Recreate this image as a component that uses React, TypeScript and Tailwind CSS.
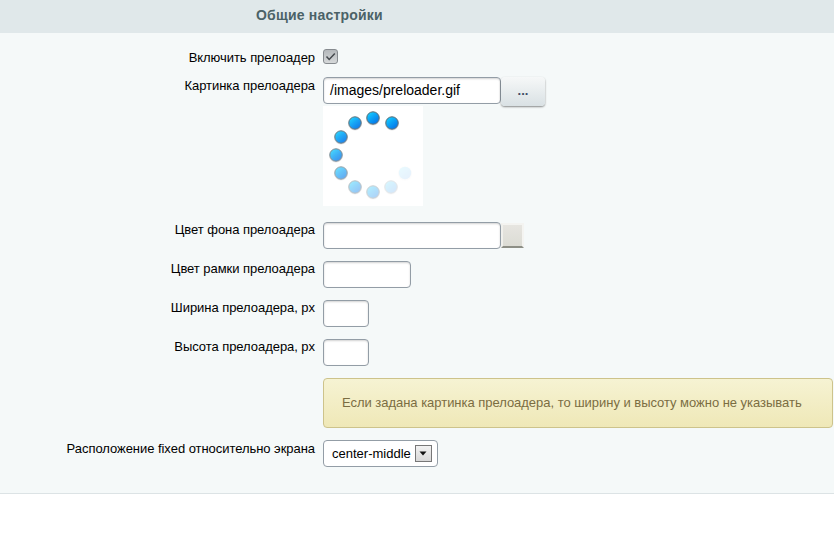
import type { ReactNode } from "react";

const fieldClass =
  "h-[27px] rounded-[4px] border border-[#939da6] bg-white shadow-[inset_0_1px_2px_rgba(0,0,0,0.18)] text-black";

function Row({ label, children, className = "", labelClass = "pt-[1px]" }: { label?: string; children: ReactNode; className?: string; labelClass?: string }) {
  return (
    <div className={`flex ${className}`}>
      <div className={`w-[315px] shrink-0 text-right text-[13px] leading-[15px] tracking-[-0.05px] text-black ${labelClass}`}>{label}</div>
      <div className="ml-[8px] flex-1 min-w-0">{children}</div>
    </div>
  );
}

function Preloader() {
  const dots = [
    { cx: 50, cy: 12, o: 1, ring: true },
    { cx: 69, cy: 17, o: 1, ring: true },
    { cx: 32, cy: 17, o: 0.95, ring: true },
    { cx: 18, cy: 31, o: 0.9, ring: true },
    { cx: 13, cy: 49, o: 0.78, ring: true },
    { cx: 18, cy: 67, o: 0.62, ring: true },
    { cx: 32, cy: 81, o: 0.42, ring: true },
    { cx: 50, cy: 86, o: 0.32, ring: true },
    { cx: 68, cy: 81, o: 0.17, ring: true },
    { cx: 82, cy: 67, o: 0.09, ring: false },
  ];
  return (
    <svg width="100" height="100" viewBox="0 0 100 100" className="block bg-white">
      <defs>
        <linearGradient id="dot" x1="0" y1="0" x2="0.8" y2="1">
          <stop offset="0" stopColor="#18dcff" />
          <stop offset="0.5" stopColor="#0aa2f6" />
          <stop offset="1" stopColor="#0670e6" />
        </linearGradient>
      </defs>
      {dots.map((d) => (
        <g key={d.cx + "-" + d.cy} opacity={d.o}>
          <circle cx={d.cx} cy={d.cy + 0.5} r="7" fill="#000" opacity="0.12" />
          <circle cx={d.cx} cy={d.cy} r="6.2" fill="url(#dot)" stroke={d.ring ? "#5f6f78" : "none"} strokeWidth="1" />
        </g>
      ))}
    </svg>
  );
}

export default function App() {
  return (
    <div className="w-[834px] h-[540px] bg-white font-['Liberation_Sans',Arial,sans-serif] overflow-hidden">
      <div className="h-[33px] bg-[#e0e8ea] pl-[256px] text-[14px] font-bold tracking-[0.2px] leading-[31px] text-[#4b6267]">
        Общие настройки
      </div>
      <div className="h-[461px] bg-[#f5f9f9] border-b border-[#dce3e5] pt-[16px] flex flex-col">
        <Row label="Включить прелоадер">
          <div className="w-[15px] h-[15px] rounded-[3px] border border-[#868b8f] bg-gradient-to-b from-[#b4b8bb] to-[#d6d9da] flex items-center justify-center">
            <svg width="11" height="11" viewBox="0 0 11 11">
              <path d="M1.5 5.5 L4.2 8.5 L9.8 2.5" fill="none" stroke="#44494d" strokeWidth="1.5" />
            </svg>
          </div>
        </Row>
        <Row label="Картинка прелоадера" className="mt-[12px]">
          <div className="flex">
            <div className={`${fieldClass} w-[178px] pl-[6px] text-[14px] leading-[25px]`}>/images/preloader.gif</div>
            <div className="w-[44px] h-[29px] rounded-[4px] shadow-[0_1px_2px_rgba(0,0,0,0.45)] bg-gradient-to-b from-[#f6f8f8] to-[#d9e1e4] text-center text-[13px] font-bold leading-[27px] text-[#3f4d66]">
              ...
            </div>
          </div>
          <Preloader />
        </Row>
        <Row label="Цвет фона прелоадера" className="mt-[16px]" labelClass="pt-0">
          <div className="flex">
            <div className={`${fieldClass} w-[178px]`} />
            <div className="w-[23px] h-[25px] mt-[1px] border-2 border-t-[#f4f4f1] border-l-[#f0f0ec] border-r-[#f4f4f1] border-b-[#8d8f86] bg-gradient-to-b from-[#e6e5e0] to-[#dcdcd5]" />
          </div>
        </Row>
        <Row label="Цвет рамки прелоадера" className="mt-[12px]" labelClass="pt-0">
          <div className={`${fieldClass} w-[88px]`} />
        </Row>
        <Row label="Ширина прелоадера, px" className="mt-[12px]" labelClass="pt-0">
          <div className={`${fieldClass} w-[46px]`} />
        </Row>
        <Row label="Высота прелоадера, px" className="mt-[12px]" labelClass="pt-0">
          <div className={`${fieldClass} w-[46px]`} />
        </Row>
        <Row className="mt-[12px]">
          <div className="h-[50px] mr-[1px] rounded-[4px] border border-[#cdc38b] bg-gradient-to-b from-[#f6f3d3] to-[#efe8b7] pl-[18px] text-[13px] tracking-[-0.03px] leading-[48px] text-[#7b6d42]">
            Если задана картинка прелоадера, то ширину и высоту можно не указывать
          </div>
        </Row>
        <Row label="Расположение fixed относительно экрана" className="mt-[12px]">
          <div className="h-[27px] w-[115px] rounded-[4px] border border-[#939da6] bg-white text-[13px] text-black pl-[8px] flex items-center">
            <span>center-middle</span>
            <span className="ml-[4px] w-[17px] h-[17px] border border-[#777] bg-gradient-to-b from-[#f2f2f2] to-[#d8d8d8] flex items-center justify-center">
              <svg width="9" height="5" viewBox="0 0 9 5">
                <path d="M0.5 0.5h7l-3.5 4z" fill="#111" />
              </svg>
            </span>
          </div>
        </Row>
      </div>
    </div>
  );
}
